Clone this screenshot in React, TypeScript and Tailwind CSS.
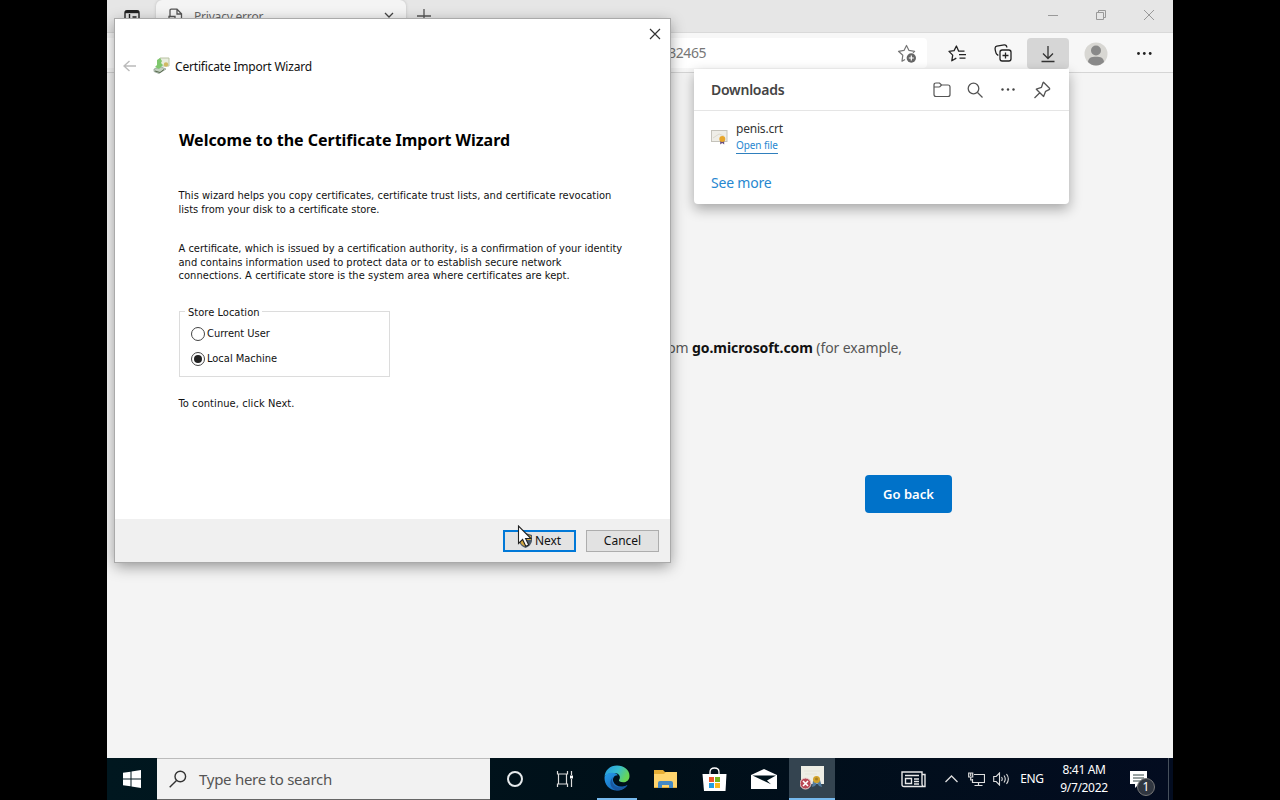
import type { ReactNode } from "react";

const segoe = "font-['Noto_Sans','Open_Sans',sans-serif]";
const tahoma = "font-['DejaVu_Sans_Condensed','DejaVu_Sans','Noto_Sans',sans-serif] [font-stretch:condensed]";

function BrowserTitleBar() {
  return (
    <div className="flex h-[33px] shrink-0 border-b border-[#d9d9d9] bg-[#e6e6e6]">
      <svg className="mt-[9px] ml-[17px] h-4 w-4 text-[#222]" viewBox="0 0 16 16" fill="none" stroke="currentColor" strokeWidth="1.4">
        <rect x="1" y="1.7" width="14" height="13" rx="2" />
        <path d="M1 3h14" strokeWidth="2.4" /><path d="M5.5 5v10M8.500 8h4" />
      </svg>
      <div className="ml-4 flex h-[32px] w-[250px] rounded-t-md bg-[#f4f4f4] shadow-[0_0_3px_#bbb]">
        <svg className="mt-[8px] ml-3 h-4 w-4 text-[#555]" viewBox="0 0 16 16" fill="none" stroke="currentColor" strokeWidth="1.3">
          <path d="M2 8.500V2.500C2 1.700 2.500 1.200 3.300 1.200H9l4.500 4.500V14H8M9 1.200V6h4.500M1 8.500h6v5H1z" />
        </svg>
        <span className="mt-[8px] ml-[10px] w-[70px] text-[12px] leading-[18px] tracking-[-0.2px] whitespace-nowrap text-[#666]">Privacy error</span>
        <svg className="mt-[10px] ml-auto mr-3 h-[10px] w-[10px] text-[#444]" viewBox="0 0 10 10" fill="none" stroke="currentColor" strokeWidth="1.3">
          <path d="M1 3l4 4 4-4" />
        </svg>
      </div>
      <svg className="mt-[8px] ml-[10px] h-4 w-4 text-[#555]" viewBox="0 0 16 16" fill="none" stroke="currentColor" strokeWidth="1.3">
        <path d="M8 1v14M1 8h14" />
      </svg>
      <div className="ml-auto flex text-[#999]">
        <svg className="mt-[10px] h-[11px] w-12" viewBox="0 0 48 11" fill="none" stroke="currentColor"><path d="M19 5.500h10" /></svg>
        <svg className="mt-[9px] h-[12px] w-12" viewBox="0 0 48 12" fill="none" stroke="currentColor"><path d="M19.500 3.500h7v7h-7zM21.500 3.500v-2h7v7h-2" /></svg>
        <svg className="mt-[9px] h-[12px] w-12" viewBox="0 0 48 12" fill="none" stroke="currentColor"><path d="M19 1l10 10M29 1L19 11" /></svg>
      </div>
    </div>
  );
}

function BrowserToolbar() {
  return (
    <div className="flex h-[40px] shrink-0 items-start border-b border-[#d5d5d5] bg-[#f7f7f7] pt-[5px]">
      <div className="flex h-[30px] w-[820px] items-center rounded-r-sm bg-white">
        <span className="mt-[-1px] ml-[519px] w-[80px] text-right text-[14px] tracking-[-0.45px] text-[#777]">5732465</span>
        <svg className="mt-[2px] ml-[191px] h-[20px] w-[20px]" viewBox="0 0 20 20" fill="none" stroke="#777" strokeWidth="1.200">
          <path d="M8 15.500L5 17.200l.8-6L1.500 7.300l5.500-.9L9.500 1.500 12 6.400l5.600.9-1.600 1.500" strokeLinejoin="round" />
          <circle cx="14.300" cy="14" r="4.700" fill="#666" stroke="none" />
          <path d="M14.300 11.500v5M11.800 14h5" stroke="#fff" />
        </svg>
      </div>
      <div className="flex h-[30px] w-[60px] items-center justify-center">
        <svg className="h-[19px] w-[19px]" viewBox="0 0 19 19" fill="none" stroke="#222" strokeWidth="1.300" strokeLinejoin="round">
          <path d="M16.500 7.200H10.700L8.400 2 6.100 6.600 1 7.400l3.700 3.700-.9 5.700 4.500-2.700M11 10.700h7M11.500 14.200h6" />
        </svg>
      </div>
      <div className="flex h-[30px] w-8 items-center justify-center">
        <svg className="h-[18px] w-[18px]" viewBox="0 0 18 18" fill="none" stroke="#222" strokeWidth="1.300">
          <rect x="6" y="6" width="11" height="11" rx="2.200" />
          <path d="M11.500 8.500v6M8.500 11.500h6M4.300 11.500L2.600 10C1.700 9 1 5.300 1.100 4c.1-1 .7-1.700 1.700-1.900l7.400-1.200c1.400-.1 2.500.9 2.700 2.600" />
        </svg>
      </div>
      <div className="ml-2 flex h-[31px] w-[42px] items-center justify-center rounded-sm bg-[#d6d6d6]">
        <svg className="h-[18px] w-[14px]" viewBox="0 0 14 18" fill="none" stroke="#333" strokeWidth="1.300"><path d="M7 1v12M2 8.500l5 5 5-5M.5 16.500h13" /></svg>
      </div>
      <div className="ml-1 flex h-[31px] w-[46px] items-center justify-center">
        <svg className="h-[24px] w-[24px]" viewBox="0 0 24 24"><circle cx="12" cy="12" r="11.500" fill="#d8d7d3" /><circle cx="12" cy="8.500" r="5" fill="#898989" /><path d="M4 20c.5-4 3-5.200 8-5.200s7.500 1.200 8 5.200C17.500 22.500 15 23.500 12 23.500s-5.500-1-8-3.500z" fill="#898989" /></svg>
      </div>
      <div className="ml-[2px] flex h-[31px] w-[46px] items-center justify-center">
        <svg className="h-[3px] w-[15px]" viewBox="0 0 15 3" fill="#222"><circle cx="1.500" cy="1.500" r="1.400" /><circle cx="7.300" cy="1.500" r="1.400" /><circle cx="13.200" cy="1.500" r="1.400" /></svg>
      </div>
    </div>
  );
}

function DownloadsPanel() {
  return (
    <section className="absolute top-[69px] left-[587px] h-[135px] w-[375px] rounded-b bg-white shadow-[0_5px_13px_rgba(0,0,0,0.32)]">
      <header className="flex h-[42px] items-center border-b border-[#e5e5e5] pr-[18px] pl-[17px] text-[#555]">
        <h2 className="text-[14px] font-semibold tracking-[-0.25px] text-[#444]">Downloads</h2>
        <div className="ml-auto flex items-center">
          <svg className="h-[16px] w-[18px]" viewBox="0 0 18 16" fill="none" stroke="currentColor" strokeWidth="1.200"><path d="M1 5V3q0-2 2-2h3.500l2 2H15q2 0 2 2v7.500q0 2-2 2H3q-2 0-2-2zH6q1 0 1.500-1L8.500 3" /></svg>
          <svg className="ml-4 h-[16px] w-[16px]" viewBox="0 0 16 16" fill="none" stroke="currentColor" strokeWidth="1.300"><circle cx="6.500" cy="6.500" r="5.300" /><path d="M10.500 10.500l5 5" /></svg>
          <svg className="mr-[18px] ml-[18px] h-[3px] w-[14px]" viewBox="0 0 14 3" fill="#444"><circle cx="1.500" cy="1.500" r="1.200" /><circle cx="7" cy="1.500" r="1.200" /><circle cx="12.500" cy="1.500" r="1.200" /></svg>
          <svg className="h-[18px] w-[18px]" viewBox="0 0 18 18" fill="none" stroke="currentColor" strokeWidth="1.300" strokeLinejoin="round"><path d="M10.500 1.300l6 6c.4.6.2 1-.4 1.300l-3.500 1.700-2 5.200-7.300-7.300 5.200-1.900L10 1.800zM6.800 11.800L1.500 17" /></svg>
        </div>
      </header>
      <div className="flex pt-[9px] pl-[17px]">
        <svg className="mt-[10px] h-[16px] w-[17px]" viewBox="0 0 17 16"><rect x=".5" y=".5" width="15.500" height="11" fill="#efeee8" stroke="#c5c3bb" /><path d="M2 8l6-4 5 2" stroke="#ddd9cd" fill="none" /><path d="M9.200 10v4.500l2-1.500 2 1.500V10z" fill="#674f80" /><circle cx="11.300" cy="9" r="3" fill="#e7a62c" /></svg>
        <div className="ml-2 flex flex-col items-start">
          <span className="h-[17px] text-[12px] leading-[18px] tracking-[-0.2px] text-[#333]">penis.crt</span>
          <a className="mt-[1px] h-[16px] border-b border-[#2f7fbd] text-[10px] leading-[15px] tracking-[-0.1px] text-[#2787d0]">Open file</a>
        </div>
      </div>
      <a className="ml-[17px] block pt-[19px] text-[14px] leading-[20px] tracking-[-0.2px] text-[#2787d0]">See more</a>
    </section>
  );
}

function Radio({ label, checked }: { label: string; checked?: boolean }) {
  return (
    <label className="flex h-[25px] items-center pl-[11px]">
      <span className="flex h-[14px] w-[14px] items-center justify-center rounded-full border border-[#444] bg-white">
        {checked && <span className="h-[8px] w-[8px] rounded-full bg-[#222]" />}
      </span>
      <span className="ml-[2px]">{label}</span>
    </label>
  );
}

function WizardDialog() {
  return (
    <section className="absolute top-[19px] left-[8px] flex h-[543px] w-[555px] flex-col bg-white text-[#111] shadow-[0_0_0_1px_#aaa,0_4px_14px_rgba(0,0,0,0.42)]">
      <header className="flex h-[95px] shrink-0">
        <svg className="mt-[41px] ml-[8px] h-[12px] w-[14px]" viewBox="0 0 14 12" fill="none" stroke="#bbb" strokeWidth="1.400"><path d="M13 6H1M6.500 1L1 6l5.500 5" /></svg>
        <svg className="mt-[38px] ml-[16px] h-[17px] w-[17px]" viewBox="0 0 17 17">
          <path d="M7 1h9v8H7z" fill="#e9eddf" stroke="#bac3a3" /><circle cx="13" cy="7.500" r="2.200" fill="#cfba62" />
          <path d="M1 12l7-2 5 2-7 4.500-5-2z" fill="#c3d1c0" stroke="#87978a" strokeWidth=".7" />
          <path d="M4 3l3-2 2 3-1 2 2 2-4 4-4-2 2-2z" fill="#7fc76d" />
          <path d="M2 14l5 1.500 4-3" stroke="#58694d" fill="none" />
        </svg>
        <h1 className="mt-[38px] ml-[5px] text-[12px] leading-[20px] tracking-[-0.19px] whitespace-nowrap">Certificate Import Wizard</h1>
        <svg className="mt-[9px] mr-[9px] ml-auto h-[12px] w-[12px]" viewBox="0 0 12 12" fill="none" stroke="#333" strokeWidth="1.200"><path d="M1 1l10 10M11 1L1 11" /></svg>
      </header>
      <main className={`flex grow flex-col items-start pl-[63px] text-[11px] leading-[13.500px] whitespace-nowrap ${tahoma}`}>
        <h2 className={`mt-[14px] ml-[1px] text-[16px] leading-[24px] font-bold tracking-[-0.03px] text-black ${segoe}`}>Welcome to the Certificate Import Wizard</h2>
        <p className="mt-[37px] ml-[0.500px]"><span className="tracking-[0.025px]">This wizard helps you copy certificates, certificate trust lists, and certificate revocation</span><br />lists from your disk to a certificate store.</p>
        <p className="mt-[26px] ml-[0.500px]">A certificate, which is issued by a certification authority, is a confirmation of your identity<br /><span className="tracking-[0.025px]">and contains information used to protect data or to establish secure network</span><br /><span className="tracking-[0.05px]">connections. A certificate store is the system area where certificates are kept.</span></p>
        <fieldset className="mt-[22px] ml-[1px] h-[72px] w-[211px] border border-[#dcdcdc]">
          <legend className="ml-[5px] px-[2px] pt-[1px] pl-[3px] tracking-[0.03px]">Store Location</legend>
          <div className="mt-[2px]">
            <Radio label="Current User" />
            <Radio label="Local Machine" checked />
          </div>
        </fieldset>
        <p className="mt-[20.500px] ml-[0.500px] tracking-[0.08px]">To continue, click Next.</p>
      </main>
      <footer className="flex h-[43px] shrink-0 items-start justify-end gap-[10px] bg-[#f0f0f0] pt-[11px] pr-[11px] text-[12px]">
        <button className="flex h-[22px] w-[73px] items-center border-2 border-[#0078d7] bg-[#e3e3e3] pl-[14px]">
          <svg className="mt-[-1px] h-[15px] w-[13px]" viewBox="0 0 13 15"><path d="M0 2l6.500-2L13 2v6q-1 5-6.500 7Q1 13 0 8z" fill="#4b5a6a" /><path d="M7.500 1.500L12 3v4H7.500zM1 7h5.500v6.500Q2 12 1 8z" fill="#d5a840" /></svg>
          <span className="ml-[3px] tracking-[-0.1px]">Next</span>
        </button>
        <button className="flex h-[22px] w-[73px] items-center justify-center border border-[#adadad] bg-[#e2e2e2]">Cancel</button>
      </footer>
      <svg className="absolute top-[506px] left-[402px] h-[24px] w-[15px]" viewBox="0 0 15 24"><path d="M1.500 1v17.500l4.100-4 3.200 6.800 2.900-1.400-3.100-6.400H14z" fill="#fff" stroke="#222" strokeWidth="1.100" /></svg>
    </section>
  );
}

function TaskCell({ children, className = "" }: { children: ReactNode; className?: string }) {
  return <div className={`flex h-full shrink-0 items-center justify-center ${className}`}>{children}</div>;
}

function Taskbar() {
  return (
    <nav className="flex h-[42px] shrink-0 bg-gradient-to-r from-[#00171f] via-[#001019] to-[#030c20] text-white">
      <TaskCell className="w-[50px]">
        <svg className="h-[18px] w-[18px]" viewBox="0 0 18 18" fill="#fff"><path d="M0 2.800l7.500-1.100v6.800H0zM8.500 1.500L18 .1v8.400H8.500zM0 9.500h7.500v6.800L0 15.200zM8.500 9.500H18v8.400l-9.500-1.400z" /></svg>
      </TaskCell>
      <div className="flex h-[42px] w-[333px] items-center border-t border-b border-t-[#bbb] border-b-[#666] bg-[#f2f2f2] pl-[12px]">
        <svg className="h-[18px] w-[18px]" viewBox="0 0 18 18" fill="none" stroke="#333" strokeWidth="1.400"><circle cx="11.300" cy="6.500" r="5.300" /><path d="M7.500 10.500L.7 17.300" /></svg>
        <span className="ml-[12px] text-[15px] tracking-[-0.27px] text-[#555]">Type here to search</span>
      </div>
      <TaskCell className="w-[50px]"><span className="h-[16px] w-[16px] rounded-full border-2 border-[#e6eaec]" /></TaskCell>
      <TaskCell className="w-[50px]">
        <svg className="mt-[-1px] h-[18px] w-[18px]" viewBox="0 0 18 18" fill="none" stroke="#ddd" strokeWidth="1.200"><path d="M1.500 1v3h10V1M1.500 17v-3h10v3M2.500 4v10M10.500 4v10M15.500 1v4M15.500 9v8" /><path d="M14 5.500h3v3h-3z" fill="#fff" stroke="none" /></svg>
      </TaskCell>
      <TaskCell className="ml-[2px] w-[49px]">
        <div className="flex h-full w-[40px] items-center justify-center border-b-2 border-[#76b9ed]">
          <svg className="h-[26px] w-[26px]" viewBox="0 0 26 26">
            <defs>
              <linearGradient id="edgeTop" x1="0" x2="1" y1="0" y2=".4"><stop stopColor="#2696df" /><stop offset=".55" stopColor="#37bdd0" /><stop offset="1" stopColor="#67d655" /></linearGradient>
              <linearGradient id="edgeBase" x1="0" x2="1" y1="0" y2="1"><stop stopColor="#269de9" /><stop offset="1" stopColor="#1159ad" /></linearGradient>
            </defs>
            <path d="M.5 12C1 5 6 .5 13 .5S25.500 5 25.500 11c0 4-3 6.300-6.300 6.300-3 0-4.800-1.200-4.200-2.300 2.500-3.500-.5-7-4.500-7C5 7.800 1.500 10 .5 12z" fill="url(#edgeTop)" />
            <path d="M.5 12.500C1.500 9 5 7.700 8.500 7.700c2.700 0 4.500 1.200 5.300 2.500C10 10 8 13.500 9.500 17c2 4.500 7.500 6 14 3-2 3.500-6 5.500-10.500 5.500C5.500 25.500.2 19.500.5 12.500z" fill="url(#edgeBase)" />
            <path d="M9 12c-1.300 2.200-1 5.500 1 8 3 3.300 9 3.200 13.500 0-2.500 4-7 5.700-11.500 5.300C6 23 4.500 16 9 12z" fill="#1a589f" />
          </svg>
        </div>
      </TaskCell>
      <TaskCell className="w-[49px]">
        <svg className="h-[20px] w-[23px]" viewBox="0 0 23 20"><path d="M0 1h9l2 2h12v16H0z" fill="#e7ae35" /><path d="M0 5h10l2-2h11v15H0z" fill="#ffd46d" /><path d="M4 19v-5q0-2 2-2h11q2 0 2 2v5h-4v-3H8v3z" fill="#4489c5" /></svg>
      </TaskCell>
      <TaskCell className="w-[49px]">
        <svg className="h-[25px] w-[25px]" viewBox="0 0 25 25"><path d="M8 8V5q0-4 4.500-4t4.500 4v3" fill="none" stroke="#fff" strokeWidth="1.300" /><path d="M.5 7h24l-1 17H2z" fill="#fff" /><path d="M7 10h5v5H7z" fill="#ec562b" /><path d="M13 10h5v5h-5z" fill="#79b51c" /><path d="M7 16h5v5H7z" fill="#229fe3" /><path d="M13 16h5v5h-5z" fill="#fdb91b" /></svg>
      </TaskCell>
      <TaskCell className="w-[49px]">
        <svg className="h-[20px] w-[26px]" viewBox="0 0 26 20"><path d="M0 6L13 0l13 6v14H0z" fill="#fff" /><path d="M1.500 6.500H25l-9 5 4 3.800z" fill="#00131c" /></svg>
      </TaskCell>
      <TaskCell className="ml-[1px] w-[46px] border-b-2 border-[#76b9ed] bg-[#344450]">
        <svg className="h-[24px] w-[25px]" viewBox="0 0 25 24"><path d="M1 0h23v18H1z" fill="#eeeee5" /><path d="M4 5h16M5 8h12" stroke="#e4e4d8" /><path d="M13 15l-1 6 3-1 2-3 2 3 3 1-2-7z" fill="#537da1" /><circle cx="16.500" cy="13.500" r="3.500" fill="#d3a32a" /><circle cx="16.500" cy="13" r="1.500" fill="#a78125" /><circle cx="5.500" cy="17.500" r="5.500" fill="#b94855" stroke="#eed6d4" /><path d="M3 15l5 5M8 15l-5 5" stroke="#fff" strokeWidth="1.600" /></svg>
      </TaskCell>
      <TaskCell className="ml-auto w-[49px]">
        <svg className="h-[17px] w-[25px]" viewBox="0 0 25 17" fill="none" stroke="#e8e8e8" strokeWidth="1.400"><path d="M21 3.500h3v12H3q-2 0-2-2V1h20v12q0 2 1.500 2.500M4 4.500h14M4.500 7.500h6v5h-6zM13 8h5M13 10.500h5M13 13h5" /></svg>
      </TaskCell>
      <TaskCell className="ml-[1px] w-[24px]"><svg className="h-[8px] w-[13px]" viewBox="0 0 13 8" fill="none" stroke="#ddd" strokeWidth="1.300"><path d="M.5 7l6-6 6 6" /></svg></TaskCell>
      <TaskCell className="w-[26px]"><svg className="h-[15px] w-[17px]" viewBox="0 0 17 15" fill="none" stroke="#ddd" strokeWidth="1.200"><path d="M6 2.500h10.500v8H4.500V7M10.500 10.500v3M6.500 13.500h8M.7 1h4v4h-4zM2.700 5v3h2M2.700 1v3" /></svg></TaskCell>
      <TaskCell className="w-[24px]"><svg className="h-[14px] w-[17px]" viewBox="0 0 17 14" fill="none" stroke="#ddd" strokeWidth="1.100"><path d="M.7 4.500h2.500L6.500 1v12L3.200 9.500H.7zM8.500 5q1.500 2 0 4M11 3.500q2.500 3.500 0 7M13.500 2q3.700 5 0 10" /></svg></TaskCell>
      <TaskCell className="w-[38px] text-[12px] tracking-[-0.3px]">ENG</TaskCell>
      <TaskCell className="w-[66px] flex-col text-[12px] leading-[18px] tracking-[-0.35px] whitespace-nowrap"><span>8:41 AM</span><span>9/7/2022</span></TaskCell>
      <TaskCell className="w-[50px] pr-[7px]">
        <div className="relative h-[17px] w-[17px]">
          <svg className="h-[17px] w-[17px]" viewBox="0 0 17 17"><path d="M0 0h17v13h-8l-4 4v-4H0z" fill="#fff" /><path d="M3 4h11M3 7h11M3 10h7" stroke="#344" /></svg>
          <span className="absolute top-[7px] left-[7px] flex h-[18px] w-[18px] items-center justify-center rounded-full border border-[#777] bg-[#303640] text-[12px] leading-[16px]">1</span>
        </div>
      </TaskCell>
      <div className="ml-[1px] w-[5px] border-l border-[#46505c]" />
    </nav>
  );
}

export default function App() {
  return (
    <div className={`flex h-[800px] w-[1280px] justify-center overflow-hidden bg-black ${segoe}`}>
      <div className="relative flex h-full w-[1066px] flex-col overflow-hidden">
        <BrowserTitleBar />
        <BrowserToolbar />
        <div className="flex grow flex-col bg-[#f4f4f4]">
          <p className="mt-[265px] ml-[550px] text-[14px] leading-[20px] tracking-[-0.09px] whitespace-nowrap text-[#555]">from <b className="text-[#111]">go.microsoft.com</b> (for example,</p>
          <button className="mt-[117px] ml-[758px] h-[38px] w-[87px] rounded-sm bg-[#0072c9] pt-[2px] text-[13px] font-semibold text-white">Go back</button>
        </div>
        <DownloadsPanel />
        <WizardDialog />
        <Taskbar />
      </div>
    </div>
  );
}
